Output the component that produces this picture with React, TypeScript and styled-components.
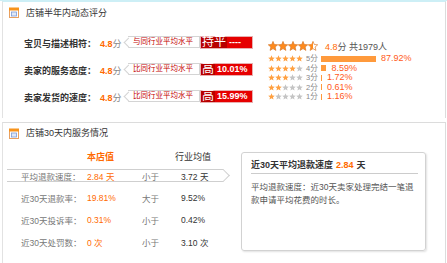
import React from "react";
import styled, { createGlobalStyle } from "styled-components";

const GlobalStyle = createGlobalStyle`
  html, body {
    margin: 0;
    padding: 0;
    background: #fff;
  }
  body {
    font-family: "Liberation Sans", "Noto Sans CJK SC", sans-serif;
    color: #333;
    width: 447px;
  }
`;

const Page = styled.div`
  width: 447px;
  height: 263px;
  overflow: hidden;
  border-top: 1px solid #cdeff6;
  box-sizing: border-box;
`;

const Panel = styled.div<{ $top: string; $height: number }>`
  margin-left: 2px;
  width: 444px;
  height: ${({ $height }) => $height}px;
  box-sizing: border-box;
  border-left: 1px solid #e2e2e2;
  border-right: 1px solid #dcdcdc;
  border-top: 1px solid ${({ $top }) => $top};
  margin-bottom: 4px;
`;

const PanelHead = styled.div<{ $h: number }>`
  height: ${({ $h }) => $h}px;
  display: flex;
  align-items: center;
  padding-left: 6px;
  gap: 7px;
`;

const HeadTitle = styled.div`
  font-size: 9px;
  color: #333;
  line-height: 12px;
`;

const RatingBody = styled.div`
  display: flex;
  padding-left: 21px;
`;

const RatingList = styled.div`
  display: flex;
  flex-direction: column;
  gap: 13px;
  padding-top: 13px;
`;

const RatingRow = styled.div`
  display: flex;
  align-items: center;
  height: 14px;
`;

const RowLabel = styled.div`
  width: 76px;
  font-size: 9px;
  font-weight: bold;
  color: #333;
  white-space: nowrap;
`;

const Score = styled.div`
  width: 28px;
  font-size: 9px;
  color: #888;
  white-space: nowrap;
  b {
    color: #ff6a00;
  }
`;

const Badge = styled.div`
  position: relative;
  width: 72px;
  height: 12px;
  box-sizing: border-box;
  border: 1px solid #d4d4d4;
  border-left: none;
  background: #fff;
  color: #c40000;
  font-size: 7.5px;
  line-height: 10px;
  padding-left: 5px;
  white-space: nowrap;
  overflow: visible;
  margin-top: -2px;
  &::before {
    content: "";
    position: absolute;
    left: -3px;
    top: 1.5px;
    width: 6px;
    height: 6px;
    border-left: 1px solid #d4d4d4;
    border-bottom: 1px solid #d4d4d4;
    background: #fff;
    transform: rotate(45deg);
  }
`;

const BadgeText = styled.span`
  position: relative;
`;

const LevelBox = styled.div`
  display: flex;
  width: 53px;
  height: 13px;
  margin-top: -2px;
  color: #fff;
  border: 1px solid #e8b0b0;
  box-sizing: border-box;
`;

const LevelChar = styled.span`
  background: #b80000;
  font-size: 12px;
  line-height: 11px;
  padding: 0 1px;
`;

const LevelText = styled.span`
  flex: 1;
  background: #e60000;
  font-size: 9px;
  font-weight: bold;
  line-height: 11px;
  padding-left: 2px;
  white-space: nowrap;
`;

const Summary = styled.div`
  margin-left: 15px;
  padding-top: 16px;
`;

const BigStars = styled.div`
  display: flex;
  align-items: center;
  height: 14px;
  margin-bottom: 1px;
`;

const SummaryText = styled.span`
  margin-left: 7px;
  font-size: 9px;
  color: #555;
  b {
    color: #ff6a00;
    font-weight: normal;
  }
`;

const DistRow = styled.div`
  display: flex;
  align-items: center;
  height: 9.5px;
`;

const StarGroup = styled.div`
  display: flex;
  width: 35px;
`;

const DistLabel = styled.span`
  width: 15px;
  margin-left: 3px;
  font-size: 7.5px;
  color: #888;
  line-height: 9px;
`;

const Bar = styled.span`
  display: inline-block;
  height: 6px;
  background: #ff9a3c;
`;

const Pct = styled.span`
  margin-left: 5px;
  font-size: 9px;
  color: #ff5a1a;
  line-height: 9px;
`;

const ServiceBody = styled.div`
  display: flex;
  padding-left: 4px;
`;

const ServiceTable = styled.div`
  width: 217px;
  display: flex;
  flex-direction: column;
  gap: 9px;
  padding-top: 8px;
`;

const ColHead = styled.div`
  display: grid;
  grid-template-columns: 66px 88px 1fr;
  padding-left: 14px;
  height: 12px;
  line-height: 12px;
  font-size: 9px;
  margin-bottom: -3px;
`;

const ColTitle = styled.span<{ $accent?: boolean }>`
  color: ${({ $accent }) => ($accent ? "#ff6a00" : "#333")};
  font-weight: ${({ $accent }) => ($accent ? "bold" : "normal")};
`;

const ServiceRow = styled.div<{ $active?: boolean }>`
  position: relative;
  display: grid;
  grid-template-columns: 66px 55px 39px 1fr;
  align-items: center;
  padding-left: 14px;
  height: 13px;
  box-sizing: border-box;
  font-size: 8.5px;
  white-space: nowrap;
  border-top: 1px solid ${({ $active }) => ($active ? "#cfcfcf" : "transparent")};
  border-bottom: 1px solid ${({ $active }) => ($active ? "#cfcfcf" : "transparent")};
  &::after {
    content: "";
    display: ${({ $active }) => ($active ? "block" : "none")};
    position: absolute;
    right: -4px;
    top: 1.2px;
    width: 8px;
    height: 8px;
    border-top: 1px solid #cfcfcf;
    border-right: 1px solid #cfcfcf;
    background: #fff;
    transform: rotate(45deg);
  }
`;

const Cell = styled.span<{ $tone: "label" | "mine" | "cmp" | "avg" }>`
  color: ${({ $tone }) =>
    $tone === "mine" ? "#ff6a00" : $tone === "avg" ? "#333" : "#777"};
`;

const DetailBox = styled.div`
  margin-left: 17px;
  margin-top: 9px;
  width: 185px;
  height: 99px;
  box-sizing: border-box;
  border: 1px solid #d2d2d2;
  border-radius: 3px;
  box-shadow: 1px 1px 2px rgba(0, 0, 0, 0.12);
  padding: 6px 7px 0 9px;
`;

const DetailTitle = styled.div`
  font-size: 9px;
  font-weight: bold;
  color: #333;
  line-height: 12px;
  padding-bottom: 2px;
  border-bottom: 1px solid #cccccc;
  b {
    color: #ff6a00;
    margin: 0 3px;
  }
`;

const DetailText = styled.div`
  margin-top: 7px;
  font-size: 8.5px;
  line-height: 13px;
  color: #555;
`;

const CalendarIcon = () => (
  <svg width="10" height="11" viewBox="0 0 10 11">
    <rect x="0.5" y="1.5" width="9" height="9" fill="#fff" stroke="#e8a060" />
    <rect x="0" y="0.5" width="10" height="3" fill="#f7941d" />
    <rect x="2.5" y="5" width="5" height="4" fill="#dfe8f7" stroke="#7a9ad6" strokeWidth="0.8" />
  </svg>
);

const STAR = "M5 0.4 L6.3 3.5 L9.7 3.8 L7.1 6 L7.9 9.4 L5 7.6 L2.1 9.4 L2.9 6 L0.3 3.8 L3.7 3.5 Z";

const Star = ({ size, fill, half }: { size: number; fill: string; half?: boolean }) => (
  <svg width={size} height={size} viewBox="0 0 10 10">
    {half && (
      <defs>
        <clipPath id="halfclip">
          <rect x="0" y="0" width="5" height="10" />
        </clipPath>
      </defs>
    )}
    {half ? (
      <>
        <path d={STAR} fill="#fff" stroke="#d7792a" strokeWidth="0.7" />
        <path d={STAR} fill={fill} clipPath="url(#halfclip)" />
      </>
    ) : (
      <path d={STAR} fill={fill} stroke={size > 8 ? "#d7792a" : "none"} strokeWidth="0.7" />
    )}
  </svg>
);

const ratings = [
  { label: "宝贝与描述相符：", lead: "与同行业平均水平", ch: "持平", rest: "----" },
  { label: "卖家的服务态度：", lead: "比同行业平均水平", ch: "高", rest: "10.01%" },
  { label: "卖家发货的速度：", lead: "比同行业平均水平", ch: "高", rest: "15.99%" },
];

const dist = [
  { n: 5, pct: "87.92%" },
  { n: 4, pct: "8.59%" },
  { n: 3, pct: "1.72%" },
  { n: 2, pct: "0.61%" },
  { n: 1, pct: "1.16%" },
];

const service = [
  { label: "平均退款速度：", mine: "2.84 天", cmp: "小于", avg: "3.72 天", active: true },
  { label: "近30天退款率：", mine: "19.81%", cmp: "大于", avg: "9.52%" },
  { label: "近30天投诉率：", mine: "0.31%", cmp: "小于", avg: "0.42%" },
  { label: "近30天处罚数：", mine: "0 次", cmp: "小于", avg: "3.10 次" },
];

export default function App() {
  return (
    <>
      <GlobalStyle />
      <Page>
        <Panel $top="#cdeff6" $height={117}>
          <PanelHead $h={21}>
            <CalendarIcon />
            <HeadTitle>店铺半年内动态评分</HeadTitle>
          </PanelHead>
          <RatingBody>
            <RatingList>
              {ratings.map((r) => (
                <RatingRow key={r.label}>
                  <RowLabel>{r.label}</RowLabel>
                  <Score>
                    <b>4.8</b>分
                  </Score>
                  <Badge>
                    <BadgeText>{r.lead}</BadgeText>
                  </Badge>
                  <LevelBox>
                    <LevelChar>{r.ch}</LevelChar>
                    <LevelText>{r.rest}</LevelText>
                  </LevelBox>
                </RatingRow>
              ))}
            </RatingList>
            <Summary>
              <BigStars>
                {[0, 1, 2, 3].map((i) => (
                  <Star key={i} size={10} fill="#ff8a1c" />
                ))}
                <Star size={10} fill="#ff8a1c" half />
                <SummaryText>
                  <b>4.8</b>分 共1979人
                </SummaryText>
              </BigStars>
              {dist.map((d) => (
                <DistRow key={d.n}>
                  <StarGroup>
                    {[1, 2, 3, 4, 5].map((i) => (
                      <Star key={i} size={7} fill={i <= d.n ? "#ffa040" : "#c4c4c4"} />
                    ))}
                  </StarGroup>
                  <DistLabel>{d.n}分</DistLabel>
                  <Bar style={{ width: Math.max(1, parseFloat(d.pct) * 0.626) }} />
                  <Pct>{d.pct}</Pct>
                </DistRow>
              ))}
            </Summary>
          </RatingBody>
        </Panel>

        <Panel $top="#dcdcdc" $height={150}>
          <PanelHead $h={20}>
            <CalendarIcon />
            <HeadTitle>店铺30天内服务情况</HeadTitle>
          </PanelHead>
          <ServiceBody>
            <ServiceTable>
              <ColHead>
                <span />
                <ColTitle $accent>本店值</ColTitle>
                <ColTitle>行业均值</ColTitle>
              </ColHead>
              {service.map((s) => (
                <ServiceRow key={s.label} $active={s.active}>
                  <Cell $tone="label">{s.label}</Cell>
                  <Cell $tone="mine">{s.mine}</Cell>
                  <Cell $tone="cmp">{s.cmp}</Cell>
                  <Cell $tone="avg">{s.avg}</Cell>
                </ServiceRow>
              ))}
            </ServiceTable>
            <DetailBox>
              <DetailTitle>
                近30天平均退款速度<b>2.84</b>天
              </DetailTitle>
              <DetailText>
                平均退款速度：近30天卖家处理完结一笔退款申请平均花费的时长。
              </DetailText>
            </DetailBox>
          </ServiceBody>
        </Panel>
      </Page>
    </>
  );
}
